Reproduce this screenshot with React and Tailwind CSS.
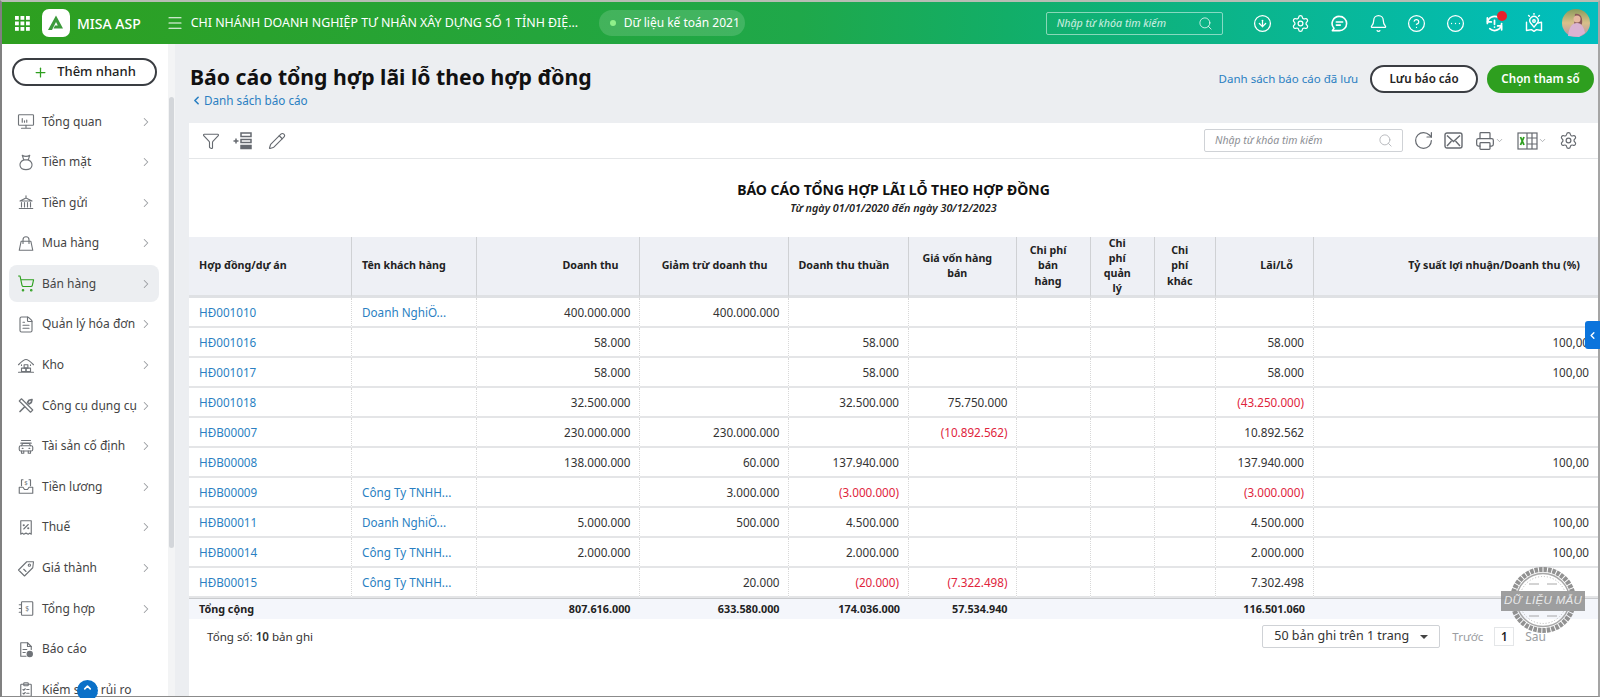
import React from "react";
import {
  Menu, Search, CircleArrowDown, Settings, Bell, CircleHelp, CircleEllipsis, Plus, ChevronLeft, ChevronRight, ChevronUp,
  Funnel, Pencil, RotateCw, Printer, ChevronDown, FileText, ShoppingCart,
} from "lucide-react";

const Ico = ({ children }) => (
  <svg viewBox="0 0 24 24" width="19" height="19" fill="none" stroke="#6f7378" strokeWidth={1.500} strokeLinecap="round" strokeLinejoin="round">{children}</svg>
);

const Monitor = () => (<Ico><rect x="2" y="3" width="20" height="14" rx="1" /><path d="M7 8v5M10 11v2M13 10v3M12 17v3M6 21h12" /></Ico>);
const MoneyBag = () => (<Ico><path d="M7 2.500c3 1.500 7 1.500 10 0l-2 6h-6z" /><path d="M9 8.500c-8 4-6 13 3 13s11-9 3-13" /></Ico>);
const Bank = () => (<Ico><path d="M12 3v2M4 10l8-4 8 4zM3 20h18M6 12v6M10 12v6M14 12v6M18 12v6" /></Ico>);
const Bag = () => (<Ico><path d="M5.500 9h13L21 21H3z" /><path d="M8 12V7a4 4 0 0 1 8 0v5" /></Ico>);
const House = () => (<Ico><path d="M2 11c4-4 7-7 10-7s6 3 10 7" /><path d="M6 11v1M18 11v1" /><rect x="9.500" y="11" width="5" height="4.500" /><rect x="6" y="15.500" width="6" height="4.500" /><rect x="12" y="15.500" width="6" height="4.500" /><path d="M2 21h20" /></Ico>);
const Tools = () => (<Ico><path d="M6 3l15 15-3 3L3 6z" /><path d="M20 4l-4 1-2 3 2 2 3-2zM10 14l-6 6" strokeWidth="2.200" /></Ico>);
const CarFront = () => (<Ico><path d="M6 4h12M5 7.500h14" /><path d="M6 11l1.500-3h9L18 11" /><rect x="3" y="11" width="18" height="7" rx="2" /><path d="M6 18v3h3v-3M15 18v3h3v-3M7 14.500h1M16 14.500h1" /></Ico>);
const Salary = () => (<Ico><path d="M8 3H6v8M16 3h2v8" /><path d="M3 13h5l2 3h4l2-3h5v8H3z" /><text x="12" y="10.500" fontSize="8" textAnchor="middle" stroke="none" fill="#6f7378">$</text></Ico>);
const Tax = () => (<Ico><path d="M5 3h14v18l-2-1.500-2 1.500-3-1.500-3 1.500-2-1.500-2 1.500z" /><path d="M9 14l6-6" /><circle cx="9" cy="9" r=".7" /><circle cx="15" cy="13" r=".7" /></Ico>);
const PriceTag = () => (<Ico><path d="M22 3l-1 8-11 11-8-8L13 3z" /><circle cx="16.500" cy="7.500" r="1.500" /><path d="M9 13l3 3" /></Ico>);
const Ledger = () => (<Ico><rect x="6" y="3" width="15" height="18" rx="1" /><path d="M3 7h3M3 12h3M3 17h3" /><text x="13.500" y="15.500" fontSize="9" textAnchor="middle" stroke="none" fill="#6f7378">$</text></Ico>);
const Report = () => (<Ico><path d="M12 21H5V3h9l5 5v4" /><path d="M14 3v5h5M8 12h5M8 16h3" /><circle cx="17" cy="18" r="3.500" fill="#6f7378" /></Ico>);
const Risk = () => (<Ico><rect x="5" y="5" width="14" height="16" rx="1" /><rect x="9" y="3" width="6" height="4" rx="1" /><path d="M8 12l1 1 2-2M13 12h3M8 17l1 1 2-2M13 17h3" /></Ico>);

const menu = [
  ["Tổng quan", <Monitor />, true],
  ["Tiền mặt", <MoneyBag />, true],
  ["Tiền gửi", <Bank />, true],
  ["Mua hàng", <Bag />, true],
  ["Bán hàng", <ShoppingCart size={19} color="#2ea01f" strokeWidth={1.500} />, true, true],
  ["Quản lý hóa đơn", <FileText size={19} color="#6f7378" strokeWidth={1.500} />, true],
  ["Kho", <House />, true],
  ["Công cụ dụng cụ", <Tools />, true],
  ["Tài sản cố định", <CarFront />, true],
  ["Tiền lương", <Salary />, true],
  ["Thuế", <Tax />, true],
  ["Giá thành", <PriceTag />, true],
  ["Tổng hợp", <Ledger />, true],
  ["Báo cáo", <Report />, false],
  ["Kiểm soát rủi ro", <Risk />, false],
];

const rows = [
  ["HĐ001010", "Doanh NghiÖ...", "400.000.000", "400.000.000", "", "", "", ""],
  ["HĐ001016", "", "58.000", "", "58.000", "", "58.000", "100,00"],
  ["HĐ001017", "", "58.000", "", "58.000", "", "58.000", "100,00"],
  ["HĐ001018", "", "32.500.000", "", "32.500.000", "75.750.000", "(43.250.000)", ""],
  ["HĐB00007", "", "230.000.000", "230.000.000", "", "(10.892.562)", "10.892.562", ""],
  ["HĐB00008", "", "138.000.000", "60.000", "137.940.000", "", "137.940.000", "100,00"],
  ["HĐB00009", "Công Ty TNHH...", "", "3.000.000", "(3.000.000)", "", "(3.000.000)", ""],
  ["HĐB00011", "Doanh NghiÖ...", "5.000.000", "500.000", "4.500.000", "", "4.500.000", "100,00"],
  ["HĐB00014", "Công Ty TNHH...", "2.000.000", "", "2.000.000", "", "2.000.000", "100,00"],
  ["HĐB00015", "Công Ty TNHH...", "", "20.000", "(20.000)", "(7.322.498)", "7.302.498", ""],
];

const Num = ({ v, last, tight }) => (
  <td className={`h-[30px] border-b-2 border-b-[#e4e5e7] pt-[1px] ${tight ? "pr-[8px]" : "pr-[9px]"} text-right ${last ? "" : "border-r border-r-[#d8d8d8] [border-right-style:dotted]"} ${v.startsWith("(") ? "text-[#e0243c]" : ""}`}>{v}</td>
);
const Empty = () => <td className="h-[30px] border-b-2 border-r border-b-[#e4e5e7] border-r-[#d8d8d8] [border-right-style:dotted]" />;
const Th = ({ children, align = "text-center", last }) => (
  <th className={`border-b-[3px] border-b-[#dfe1e4] ${last ? "pr-[18px]" : "border-r border-r-[#cfd1d4] pr-[20px]"} pl-[10px] ${align} text-[10.700px] font-bold leading-[15.200px] text-[#222]`}>
    <div className="-my-[4px]">{children}</div>
  </th>
);

const Avatar = () => (
  <svg width="28" height="28" viewBox="0 0 28 28"><defs><linearGradient id="av" x1="0" y1="0" x2="0" y2="1"><stop offset="0" stopColor="#8a9a5a" /><stop offset=".5" stopColor="#d8c08a" /><stop offset="1" stopColor="#b790a8" /></linearGradient></defs><circle cx="14" cy="14" r="14" fill="url(#av)" /><path d="M13 5c5-1 8 3 7 10l-3 3-5-2z" fill="#8a5a5a" /><circle cx="15" cy="10" r="3.500" fill="#e6b9a0" /><path d="M6 27c1-9 4-13 9-13s7 5 8 10l-6 4z" fill="#d9b3d2" /></svg>
);

export default function App() {
  return (
    <div style={{ fontFamily: '"Noto Sans", sans-serif' }} className="relative h-[698px] w-[1600px] overflow-hidden bg-white text-[12px] text-[#333]">
      <div className="flex h-[697px] flex-col overflow-hidden border-b border-l-2 border-r-2 border-t-2 border-b-[#8b8b8b] border-l-[#808080] border-r-[#a5a5a5] border-t-[#b7bdb4]">
        <header className="flex h-[42px] shrink-0 items-center bg-[linear-gradient(90deg,#2e9f1f_0%,#1fa84a_50%,#12ae68_63%,#00bfc0_100%)] text-white">
          <svg className="ml-[13px] shrink-0" width="15" height="15" viewBox="0 0 15 15" fill="#fff">
            {[0, 5.500, 11].map((x) => [0, 5.500, 11].map((y) => <rect key={`${x}${y}`} x={x} y={y} width="3.800" height="3.800" />))}
          </svg>
          <div className="ml-[12px] flex h-[28px] w-[28px] shrink-0 items-center justify-center rounded-[7px] bg-white">
            <svg width="18" height="18" viewBox="0 0 18 18"><path d="M9 1.500 1 16h4l4-8 1.800 3.500H8l-1.500 3H16z" fill="#3c9a3a" /></svg>
          </div>
          <span className="ml-[7px] whitespace-nowrap text-[14px] font-medium">MISA ASP</span>
          <Menu className="ml-[25px] shrink-0" size={18} strokeWidth={1.500} />
          <span className="ml-[7px] w-[386px] shrink-0 whitespace-nowrap text-[12.400px]">CHI NHÁNH DOANH NGHIỆP TƯ NHÂN XÂY DỰNG SỐ 1 TỈNH ĐIỆ...</span>
          <div className="ml-[22px] flex h-[26px] w-[146px] shrink-0 items-center rounded-full bg-white/15 pl-[11px] text-[12px]">
            <span className="h-[6px] w-[6px] rounded-full bg-[#8ff08a]" />
            <span className="ml-[8px] whitespace-nowrap">Dữ liệu kế toán 2021</span>
          </div>
          <div className="ml-[301px] flex h-[23px] w-[177px] shrink-0 items-center justify-between rounded-[2px] border border-white/50 pl-[10px] pr-[9px] text-[10.700px] italic text-white/80">
            <span>Nhập từ khóa tìm kiếm</span>
            <Search size={15} strokeWidth={1.500} />
          </div>
          <div className="ml-[30px] flex w-[309px] shrink-0 items-center gap-[19.700px]">
            <CircleArrowDown size={19} strokeWidth={1.600} className="shrink-0" />
            <Settings size={19} strokeWidth={1.600} className="shrink-0" />
            <svg className="shrink-0" width="19" height="19" viewBox="0 0 24 24" fill="none" stroke="#fff" strokeWidth="2" strokeLinecap="round" strokeLinejoin="round"><path d="M12 3a9 9 0 0 1 0 18H3l2-3a9 9 0 0 1 7-15z" /><path d="M8 10h8M8 14h5" /></svg>
            <Bell size={19} strokeWidth={1.600} className="shrink-0" />
            <CircleHelp size={19} strokeWidth={1.600} className="shrink-0" />
            <CircleEllipsis size={19} strokeWidth={1.600} className="shrink-0" />
            <div className="relative shrink-0">
              <svg width="19" height="19" viewBox="0 0 24 24" fill="none" stroke="#fff" strokeWidth="2.200" strokeLinecap="round" strokeLinejoin="round"><path d="M3 12a9 9 0 0 1 14-7.500M21 12a9 9 0 0 1-15 6.500" /><path d="M3 5v5h5M21 20v-5h-5" /><path d="M12 8v5M12 16.500v.01" /></svg>
              <span className="absolute -right-[3px] -top-[3px] h-[10px] w-[10px] rounded-full bg-[#e8202a]" />
            </div>
            <svg className="shrink-0" width="20" height="20" viewBox="0 0 24 24" fill="none" stroke="#fff" strokeWidth="1.700" strokeLinecap="round" strokeLinejoin="round"><path d="M3 11v10l6-1 3 2 3-2 6 1V11l-4 1" /><path d="M8 12l4 5 4-5a5 5 0 1 0-8 0z" /><circle cx="12" cy="9.500" r="1.500" /><path d="M12 .500v1M5.500 3l1 1M18.500 3l-1 1" /></svg>
          </div>
          <div className="shrink-0"><Avatar /></div>
        </header>

        <div className="flex min-h-0 flex-1">
          <aside className="flex w-[173px] shrink-0 bg-white">
            <div className="w-[166px] shrink-0 overflow-hidden">
              <button className="ml-[10px] mt-[14px] flex h-[28px] w-[145px] items-center justify-center gap-[9px] rounded-full border-2 border-[#3a3d42] text-[13px] font-medium text-[#222]">
                <Plus size={15} color="#2e9f1f" strokeWidth={2} />
                Thêm nhanh
              </button>
              <nav className="ml-[7px] mt-[17px] flex w-[150px] flex-col gap-[3.600px]">
                {menu.map(([label, icon, chev, active]) => (
                  <div key={label} className={`flex h-[37px] shrink-0 items-center rounded-[8px] pl-[8px] pr-[6px] text-[12px] leading-[12px] text-[#444] ${active ? "bg-[#eceef1]" : ""}`}>
                    <span className="flex w-[18px] shrink-0 justify-center">{icon}</span>
                    <span className="ml-[7px] flex-1 whitespace-nowrap">{label}</span>
                    {chev && <ChevronRight size={14} color="#9a9da1" strokeWidth={1.800} className="shrink-0" />}
                  </div>
                ))}
              </nav>
            </div>
            <div className="w-[7px] shrink-0 bg-[#f3f4f5] pt-[53px]">
              <div className="ml-[1px] h-[451px] w-[5px] rounded-[3px] bg-[#d3d6da]" />
            </div>
          </aside>

          <main className="flex min-w-0 flex-1 flex-col bg-[#eceef1] pl-[14px]">
            <div className="flex h-[79px] shrink-0">
              <div className="pl-[1px] pt-[14px]">
                <h1 className="whitespace-nowrap text-[21.200px] font-bold leading-[38px] text-[#111]">Báo cáo tổng hợp lãi lỗ theo hợp đồng</h1>
                <div className="-mt-[4px] flex items-center text-[11.700px] leading-[16px] text-[#2a7fc2]">
                  <ChevronLeft size={13} strokeWidth={3} />
                  <span className="ml-[1px]">Danh sách báo cáo</span>
                </div>
              </div>
              <div className="ml-auto mt-[21px] flex h-[28px] items-center pr-[4px]">
                <span className="text-[11.500px] text-[#2a7fc2]">Danh sách báo cáo đã lưu</span>
                <button className="ml-[12px] h-[28px] w-[108px] rounded-full border-2 border-[#3a3d42] bg-white text-[11.600px] font-semibold text-[#222]">Lưu báo cáo</button>
                <button className="ml-[9px] h-[28px] w-[107px] rounded-full bg-[#2e9f1f] text-[11.600px] font-semibold text-white">Chọn tham số</button>
              </div>
            </div>
            <section className="flex min-h-0 flex-1 flex-col bg-white">
              <div className="flex h-[36px] shrink-0 items-center border-b border-[#e4e6e8] text-[#666a70]">
                <Funnel className="ml-[13px]" size={18} strokeWidth={1.500} />
                <svg className="ml-[13px]" width="20" height="18" viewBox="0 0 20 18" fill="none" stroke="#666a70" strokeWidth="1.500"><path d="M0.500 9h5M3 6.500v5" /><rect x="8" y="1" width="10" height="3.500" /><rect x="8" y="7.500" width="10" height="3" /><rect x="8" y="13.500" width="10" height="3" fill="#666a70" /></svg>
                <Pencil className="ml-[15px]" size={18} strokeWidth={1.500} />
                <div className="ml-auto flex h-[23px] w-[199px] items-center justify-between rounded-[2px] border border-[#cfd2d6] pl-[10px] pr-[9px] text-[10.500px] italic text-[#8b8e93]">
                  <span>Nhập từ khóa tìm kiếm</span>
                  <Search size={15} color="#b5b8bc" strokeWidth={1.500} />
                </div>
                <RotateCw className="ml-[10px]" size={21} strokeWidth={1.400} />
                <svg className="ml-[10px]" width="19" height="17" viewBox="0 0 19 17" fill="none" stroke="#666a70" strokeWidth="1.400"><rect x="1" y="1" width="17" height="15" rx="2" /><path d="M3 3.500l6.500 6 6.500-6M3 14l4.500-5M16 14l-4.500-5" /></svg>
                <Printer className="ml-[12px]" size={20} strokeWidth={1.500} />
                <ChevronDown size={9} color="#9a9da1" strokeWidth={2} />
                <svg className="ml-[13px]" width="21" height="18" viewBox="0 0 21 18" fill="none" stroke="#666a70" strokeWidth="1.200"><rect x="1" y="1" width="19" height="16" /><path d="M10 1v16M15 1v16M10 6h10M10 12h10" /><path d="M3.500 5l3.500 8M7 5l-3.500 8" stroke="#2e9f1f" strokeWidth="1.800" /></svg>
                <ChevronDown size={9} color="#9a9da1" strokeWidth={2} />
                <Settings className="ml-[12px] mr-[20px]" size={19} strokeWidth={1.500} />
              </div>

              <div className="h-[78px] shrink-0 pt-[21px] text-center">
                <div className="text-[14px] font-bold leading-[20px] text-[#111]">BÁO CÁO TỔNG HỢP LÃI LỖ THEO HỢP ĐỒNG</div>
                <div className="text-[10.800px] font-semibold italic leading-[16px] text-[#222]">Từ ngày 01/01/2020 đến ngày 30/12/2023</div>
              </div>

              <table className="w-[1409px] shrink-0 table-fixed border-separate border-spacing-0 text-[11.700px] text-[#333]">
                <colgroup>
                  <col className="w-[163px]" /><col className="w-[124.500px]" /><col className="w-[163px]" /><col className="w-[149px]" /><col className="w-[120.500px]" /><col className="w-[107.500px]" /><col className="w-[74px]" /><col className="w-[64.500px]" /><col className="w-[60.500px]" /><col className="w-[98.500px]" /><col className="w-[284px]" />
                </colgroup>
                <thead>
                  <tr className="h-[61px] bg-[#eef0f5]">
                    <Th align="text-left">Hợp đồng/dự án</Th>
                    <Th align="text-left">Tên khách hàng</Th>
                    <Th align="text-right">Doanh thu</Th>
                    <Th align="text-right">Giảm trừ doanh thu</Th>
                    <Th align="text-right"><span className="whitespace-nowrap">Doanh thu thuần</span></Th>
                    <Th>Giá vốn hàng bán</Th>
                    <Th>Chi phí bán hàng</Th>
                    <Th>Chi phí quản lý</Th>
                    <Th>Chi phí khác</Th>
                    <Th align="text-right">Lãi/Lỗ</Th>
                    <Th align="text-right" last>Tỷ suất lợi nhuận/Doanh thu (%)</Th>
                  </tr>
                </thead>
                <tbody>
                  {rows.map((r) => (
                    <tr key={r[0]}>
                      <td className="h-[30px] border-b-2 border-r border-b-[#e4e5e7] border-r-[#d8d8d8] pl-[10px] pt-[1px] text-[#2a7fc2] [border-right-style:dotted]">{r[0]}</td>
                      <td className="h-[30px] border-b-2 border-r border-b-[#e4e5e7] border-r-[#d8d8d8] pl-[10px] pt-[1px] text-[#2a7fc2] [border-right-style:dotted]">{r[1]}</td>
                      <Num v={r[2]} tight />
                      <Num v={r[3]} tight />
                      <Num v={r[4]} />
                      <Num v={r[5]} tight />
                      <Empty /><Empty /><Empty />
                      <Num v={r[6]} />
                      <Num v={r[7]} last />
                    </tr>
                  ))}
                  <tr className="h-[21px] bg-[#f4f6fb] text-[10.800px] font-bold text-[#222]">
                    <td colSpan={2} className="border-t border-t-[#c9cbce] pl-[10px]">Tổng cộng</td>
                    <td className="border-t border-t-[#c9cbce] pr-[9px] text-right">807.616.000</td>
                    <td className="border-t border-t-[#c9cbce] pr-[9px] text-right">633.580.000</td>
                    <td className="border-t border-t-[#c9cbce] pr-[9px] text-right">174.036.000</td>
                    <td className="border-t border-t-[#c9cbce] pr-[9px] text-right">57.534.940</td>
                    <td className="border-t border-t-[#c9cbce]" /><td className="border-t border-t-[#c9cbce]" /><td className="border-t border-t-[#c9cbce]" />
                    <td className="border-t border-t-[#c9cbce] pr-[9px] text-right">116.501.060</td>
                    <td className="border-t border-t-[#c9cbce]" />
                  </tr>
                </tbody>
              </table>

              <div className="flex shrink-0 items-center pt-[6px] text-[11.600px] text-[#333]">
                <span className="ml-[18px]">Tổng số: <b className="font-semibold">10</b> bản ghi</span>
                <div className="ml-auto flex h-[23px] w-[178px] items-center justify-between rounded-[2px] border border-[#cfd2d6] pl-[11px] pr-[11px] text-[12.500px]">
                  <span>50 bản ghi trên 1 trang</span>
                  <span className="h-0 w-0 border-x-[4px] border-t-[4px] border-x-transparent border-t-[#444]" />
                </div>
                <span className="ml-[12px] text-[11.500px] text-[#9a9da1]">Trước</span>
                <span className="ml-[11px] flex h-[19px] w-[20px] items-center justify-center border border-[#e4e6e8] font-semibold text-[#222]">1</span>
                <span className="ml-[11px] mr-[52px] text-[12px] text-[#9a9da1]">Sau</span>
              </div>
            </section>
          </main>
        </div>
      </div>

      <div className="absolute left-[1585px] top-[321px] flex h-[28px] w-[15px] items-center justify-center rounded-l-[3px] bg-[#0b74dc] text-white">
        <ChevronLeft size={11} strokeWidth={3} />
      </div>
      <div className="absolute left-[77px] top-[680px] flex h-[21px] w-[21px] items-start justify-center rounded-full bg-[#0a70c8] pt-[2px] text-white">
        <ChevronUp size={11} strokeWidth={3.500} />
      </div>
      <div className="absolute left-[1501px] top-[566px] h-[68px] w-[84px] opacity-85">
        <svg className="absolute left-[8px] top-0" width="68" height="68" viewBox="0 0 68 68" fill="none">
          <circle cx="34" cy="34" r="30.500" stroke="#7f7f7f" strokeWidth="5" strokeDasharray="3.500 1" />
          <circle cx="34" cy="34" r="26.500" stroke="#9a9a9a" strokeWidth="1.500" />
          <circle cx="34" cy="34" r="23.500" stroke="#aaa" strokeWidth="1" strokeDasharray="1 2" />
          <path d="M20 18h10M38 18h10M20 50h10M38 50h10" stroke="#9a9a9a" strokeWidth="1" />
        </svg>
        <div style={{ fontFamily: '"Liberation Sans", sans-serif' }} className="absolute left-0 top-[25px] flex h-[20px] w-[84px] items-center justify-center bg-[#8f8f8f] text-[11.500px] italic tracking-[0.3px] text-[#e8e8e8]">DỮ LIỆU MẪU</div>
      </div>
    </div>
  );
}
